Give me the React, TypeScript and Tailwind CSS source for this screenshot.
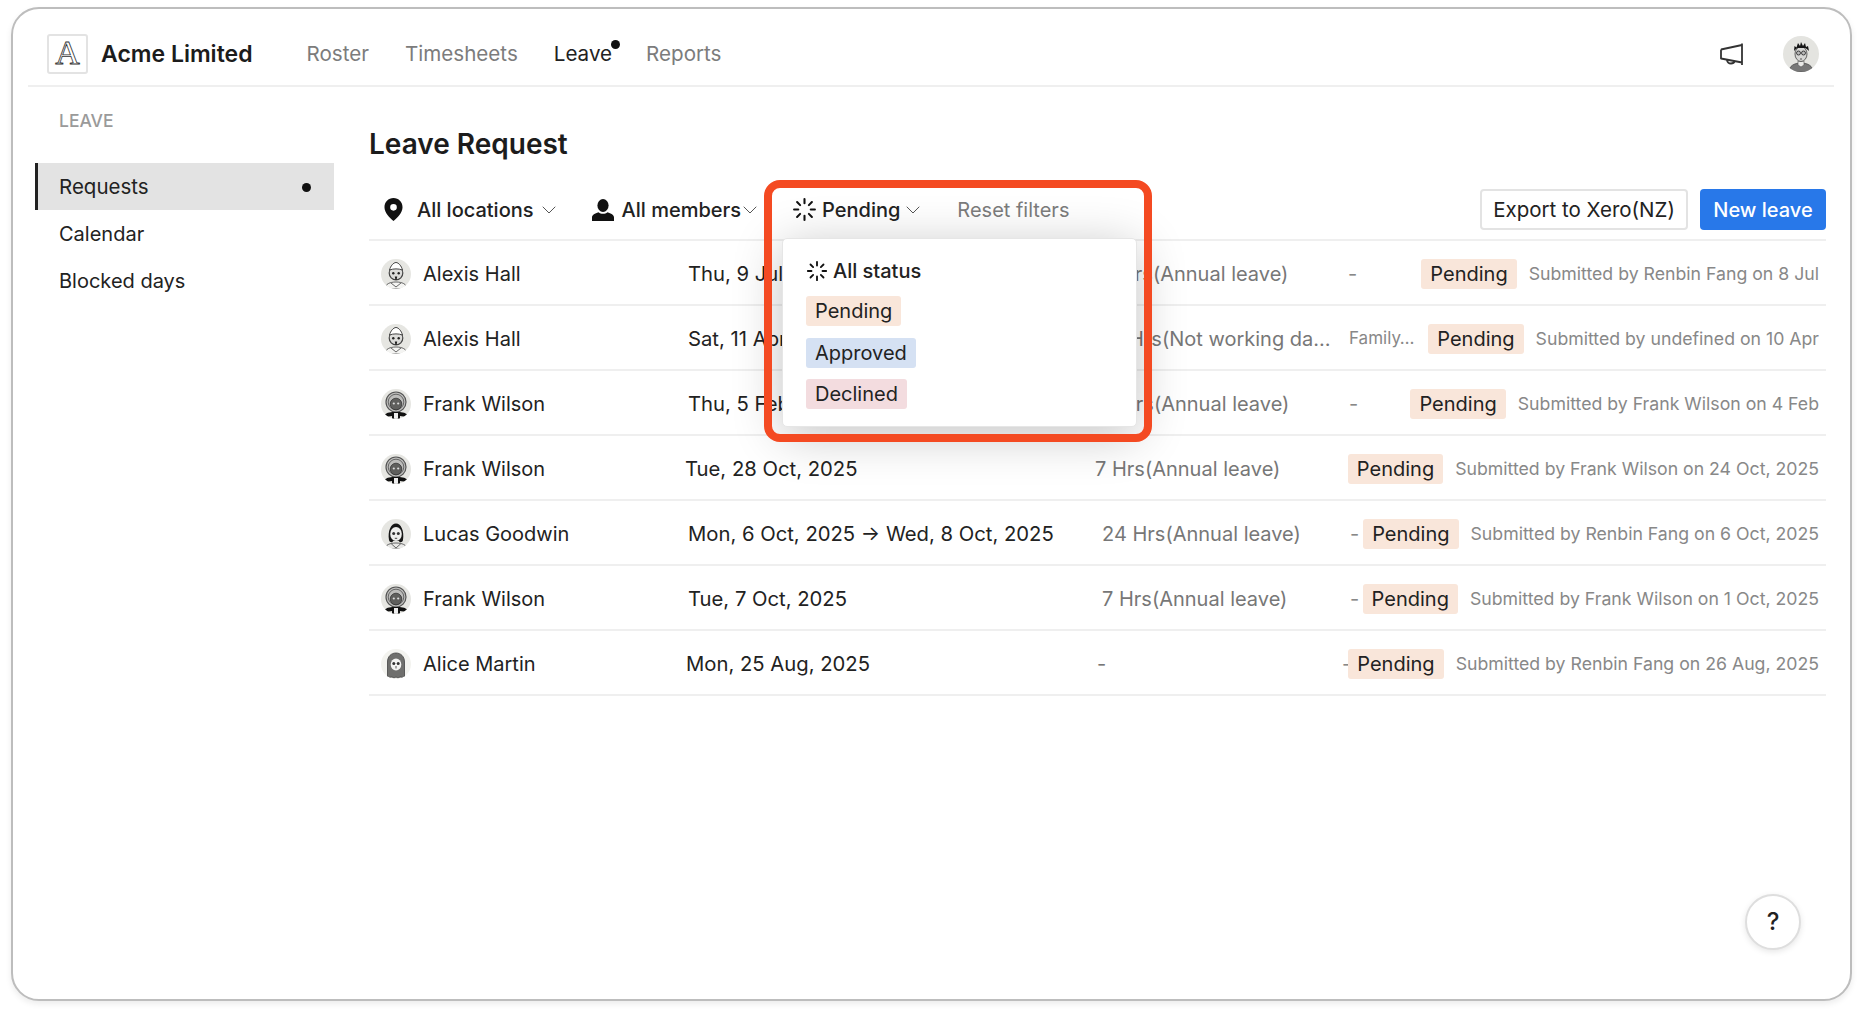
import { ChevronDown, Loader } from 'lucide-react';

type Face = 'alexis' | 'frank' | 'lucas' | 'alice';

type LeaveRow = {
  name: string;
  face: Face;
  date: string;
  dateClass: string;
  hours: string;
  hoursClass: string;
  note: string;
  noteClass: string;
  by: string;
};

const rows: LeaveRow[] = [
  { name: 'Alexis Hall', face: 'alexis', date: 'Thu, 9 Jul, 2026', dateClass: 'ml-[2px] w-[415px]', hours: '7 Hrs(Annual leave)', hoursClass: 'w-[245px]', note: '-', noteClass: 'w-[70px]', by: 'Submitted by Renbin Fang on 8 Jul' },
  { name: 'Alexis Hall', face: 'alexis', date: 'Sat, 11 Apr, 2026', dateClass: 'ml-[2px] w-[424px]', hours: '7 Hrs(Not working da…', hoursClass: 'w-[237px]', note: 'Family…', noteClass: 'w-[77px] text-[17px]', by: 'Submitted by undefined on 10 Apr' },
  { name: 'Frank Wilson', face: 'frank', date: 'Thu, 5 Feb, 2026', dateClass: 'ml-[2px] w-[416px]', hours: '7 Hrs(Annual leave)', hoursClass: 'w-[245px]', note: '-', noteClass: 'w-[60px]', by: 'Submitted by Frank Wilson on 4 Feb' },
  { name: 'Frank Wilson', face: 'frank', date: 'Tue, 28 Oct, 2025', dateClass: '-ml-[1px] w-[410px]', hours: '7 Hrs(Annual leave)', hoursClass: 'w-[250px]', note: '', noteClass: 'w-0', by: 'Submitted by Frank Wilson on 24 Oct, 2025' },
  { name: 'Lucas Goodwin', face: 'lucas', date: 'Mon, 6 Oct, 2025 → Wed, 8 Oct, 2025', dateClass: 'ml-[2px] w-[414px]', hours: '24 Hrs(Annual leave)', hoursClass: 'w-[248px]', note: '-', noteClass: 'w-[13px]', by: 'Submitted by Renbin Fang on 6 Oct, 2025' },
  { name: 'Frank Wilson', face: 'frank', date: 'Tue, 7 Oct, 2025', dateClass: 'ml-[2px] w-[414px]', hours: '7 Hrs(Annual leave)', hoursClass: 'w-[248px]', note: '-', noteClass: 'w-[10px]', by: 'Submitted by Frank Wilson on 1 Oct, 2025' },
  { name: 'Alice Martin', face: 'alice', date: 'Mon, 25 Aug, 2025', dateClass: 'ml-0 w-[411px]', hours: '-', hoursClass: 'w-[245px]', note: '-', noteClass: 'w-[5px]', by: 'Submitted by Renbin Fang on 26 Aug, 2025' },
];

function Avatar({ face }: { face: Face }) {
  return (
    <svg viewBox="0 0 30 30" className="h-[30px] w-[30px] flex-none">
      <defs>
        <clipPath id={`clip-${face}`}>
          <circle cx="15" cy="15" r="15" />
        </clipPath>
      </defs>
      <circle cx="15" cy="15" r="15" fill={face === 'alice' ? '#f3f3ef' : '#e6e6e2'} />
      <g clipPath={`url(#clip-${face})`}>
        {face === 'alexis' && (
          <>
            <path d="M4 30c0-5 5-7 11-7s11 2 11 7z" fill="#f4f4f2" stroke="#666" strokeWidth="1" />
            <circle cx="15" cy="14" r="6.800" fill="#dcdcda" stroke="#444" strokeWidth="1.200" />
            <path d="M8.500 11c1-4 4-7.500 6.500-7.500s5.500 3.500 6.500 7.500c-4-1.500-9-1.500-13 0z" fill="#fff" stroke="#444" strokeWidth="1" />
            <circle cx="12.300" cy="14.200" r="1.200" fill="#222" />
            <circle cx="17.700" cy="14.200" r="1.200" fill="#222" />
            <path d="M13.800 17.500h2.400l-.6 3.500h-1.200z" fill="#222" />
            <path d="M10 24l5 4 5-4" fill="none" stroke="#666" strokeWidth="1" />
          </>
        )}
        {face === 'frank' && (
          <>
            <circle cx="15" cy="13" r="10" fill="#bdbdbb" stroke="#555" strokeWidth="1.200" />
            <circle cx="15" cy="13" r="7.800" fill="none" stroke="#666" strokeWidth="1" />
            <circle cx="15" cy="15" r="5.800" fill="#5f5f5d" stroke="#2c2c2c" strokeWidth="0.700" />
            <circle cx="12.800" cy="14.500" r="1.100" fill="#ddd" />
            <circle cx="17.200" cy="14.500" r="1.100" fill="#ddd" />
            <path d="M3 26.500c3-3.500 7-3.500 12-3.500s9 0 12 3.500c-3 1.500-6 1-8 .5v3h-8v-3c-2 .5-5 1-8-.5z" fill="#111" />
            <rect x="13" y="24" width="4" height="6" fill="#eee" />
          </>
        )}
        {face === 'lucas' && (
          <>
            <path d="M4 30c0-4 5-6 11-6s11 2 11 6z" fill="#e9e9e7" stroke="#666" strokeWidth="1" />
            <path d="M8 21c-1.500-9 2-16.500 7-16.500S23.500 12 22 21c-.5 2.500-3.500 3-4 1h-6c-.5 2-3.500 1.500-4-1z" fill="#161616" />
            <ellipse cx="15" cy="15" rx="5.800" ry="7" fill="#efefed" />
            <circle cx="12.700" cy="14.500" r="1.500" fill="#333" />
            <circle cx="17.300" cy="14.500" r="1.500" fill="#333" />
            <path d="M13.800 19.300h2.400" stroke="#444" strokeWidth="1" />
            <path d="M10 24.500l5 4.500 5-4.500" fill="none" stroke="#666" strokeWidth="1" />
          </>
        )}
        {face === 'alice' && (
          <>
            <path d="M6.500 28V13c0-5.500 3.700-9 8.500-9s8.500 3.500 8.500 9v15c-2 1-3 0-4.500 0-1.500 1-2.500 1-4 0-1.500 1-2.500 1-4 0-1.500 0-2.500 1-4.500 0z" fill="#6f6f6d" stroke="#444" strokeWidth="0.800" />
            <ellipse cx="15" cy="15.500" rx="5.300" ry="6" fill="#f4f4f2" />
            <circle cx="12.800" cy="14.500" r="1.500" fill="#333" />
            <circle cx="17.200" cy="14.500" r="1.500" fill="#333" />
            <path d="M15 17v2.500" stroke="#555" strokeWidth="1" />
          </>
        )}
      </g>
    </svg>
  );
}

function UserAvatar() {
  return (
    <svg viewBox="0 0 36 36" className="h-[36px] w-[36px]">
      <defs>
        <clipPath id="clip-user">
          <circle cx="18" cy="18" r="18" />
        </clipPath>
      </defs>
      <circle cx="18" cy="18" r="18" fill="#e4e4e0" />
      <g clipPath="url(#clip-user)">
        <path d="M6 36c0-6 5-9 12-9s12 3 12 9z" fill="#777" stroke="#444" strokeWidth="0.700" />
        <path d="M15 25h6v4l-3 2-3-2z" fill="#e8e8e6" stroke="#555" strokeWidth="0.600" />
        <ellipse cx="18" cy="18" rx="6" ry="7.500" fill="#d6d6d4" stroke="#444" strokeWidth="0.800" />
        <path d="M11 15l.5-5 2 1.500L15 7l2 3 1-4 2 4 2-3 1 4 2-1 1 5c-1.500-1.500-3-3-4.500-3h-6C13.500 12 12.500 13.500 11 15z" fill="#161616" />
        <circle cx="15.500" cy="17" r="2" fill="#bbb" stroke="#222" strokeWidth="0.800" />
        <circle cx="20.500" cy="17" r="2" fill="#bbb" stroke="#222" strokeWidth="0.800" />
        <path d="M17 23h2" stroke="#333" strokeWidth="0.800" />
      </g>
    </svg>
  );
}

function PinIcon() {
  return (
    <svg viewBox="0 0 20 24" className="h-[23px] w-[19px]">
      <path fillRule="evenodd" d="M10 0C4.500 0 .5 4.200.5 9.500.5 15.500 6 20.500 10 24c4-3.500 9.500-8.500 9.500-14.500C19.500 4.200 15.500 0 10 0zm0 6.200a3.500 3.500 0 1 1 0 7 3.500 3.500 0 0 1 0-7z" fill="#111" />
    </svg>
  );
}

function PersonIcon() {
  return (
    <svg viewBox="0 0 22 22" className="h-[22px] w-[22px]">
      <ellipse cx="11" cy="6.500" rx="5.600" ry="6.500" fill="#111" />
      <path d="M0 22v-3.500c0-2.500 3-4 6.500-5.200 1.300 1 2.800 1.500 4.500 1.500s3.200-.5 4.500-1.500c3.500 1.200 6.500 2.700 6.500 5.200V22z" fill="#111" />
    </svg>
  );
}

function Megaphone() {
  return (
    <svg viewBox="0 0 24 23" className="h-[23px] w-[24px]" fill="none" stroke="#333" strokeWidth="1.800" strokeLinejoin="round">
      <path d="M1 6.500l21-4.500M22 .5v21.500M22 19.500L1 15.500V6.500" />
      <path d="M7 16.800c.3 2.400 2 3.700 4 3.700 2 0 3.300-1 3.800-2.400" />
    </svg>
  );
}

function PendingBadge() {
  return <span className="flex h-[30px] flex-none items-center rounded-[3px] bg-[#f9e6da] px-[9px] text-[20px] text-[#222]">Pending</span>;
}

export default function App() {
  return (
    <div className="h-[1016px] w-[1863px] overflow-hidden bg-white pl-[11px] pt-[7px] font-['Inter','Liberation_Sans',sans-serif]">
      <div className="relative h-[994px] w-[1841px] rounded-[28px] border-2 border-[#bdbdbd] bg-white shadow-[0_3px_6px_rgba(0,0,0,0.08)]">
        <header className="ml-[15px] mr-[16px] flex h-[78px] items-center border-b-2 border-[#efefef] pl-[19px] pr-[15px] pt-[14px]">
          <div className="flex h-[40px] w-[41px] flex-none items-center justify-center rounded-[3px] border-2 border-[#e3e3e3] pb-[2px] font-['Liberation_Serif',serif] text-[34px] leading-none text-white [-webkit-text-stroke:0.8px_#333]">A</div>
          <span className="ml-[13px] text-[23px] font-semibold text-[#1c1c1c]">Acme Limited</span>
          <nav className="ml-[54px] flex items-center gap-[36px] text-[20.6px] text-[#7c7c7c]">
            <span>Roster</span>
            <span>Timesheets</span>
            <span className="relative -mr-[2px] text-[#222]">
              Leave
              <span className="absolute -right-[8px] top-[1px] h-[9px] w-[9px] rounded-full bg-[#111]" />
            </span>
            <span>Reports</span>
          </nav>
          <div className="ml-auto flex items-center gap-[39px]">
            <Megaphone />
            <UserAvatar />
          </div>
        </header>

        <div className="flex">
          <aside className="ml-[22px] w-[299px] flex-none">
            <div className="mt-[23px] h-[22px] text-[17.5px] font-medium leading-[22px] text-[#9a9a9a]">
              <span className="ml-[24px]">LEAVE</span>
            </div>
            <div className="mt-[31px] flex h-[47px] items-center justify-between border-l-[3px] border-[#222] bg-[#e3e3e3] pl-[21px] pr-[23px] pt-[1px] text-[20.5px] text-[#222]">
              <span>Requests</span>
              <span className="h-[9px] w-[9px] rounded-full bg-[#111]" />
            </div>
            <div className="flex h-[47px] items-center pl-[24px] text-[20px] text-[#222]">Calendar</div>
            <div className="flex h-[47px] items-center pl-[24px] text-[20px] text-[#222]">Blocked days</div>
          </aside>

          <main className="ml-[35px] w-[1457px] flex-none">
            <h1 className="mt-[39px] h-[36px] text-[28px] font-semibold leading-[36px] text-[#1c1c1c]">Leave Request</h1>

            <div className="mt-[27px] flex h-[52px] items-start border-b-2 border-[#efefef] pb-[10px] pl-[15px] text-[20px] text-[#222]">
              <div className="flex h-[41px] items-center font-medium">
                <PinIcon />
                <span className="ml-[14px]">All locations</span>
                <ChevronDown className="ml-[3px] h-[24px] w-[24px] text-[#555]" strokeWidth={1} />
                <span className="ml-[31px]"><PersonIcon /></span>
                <span className="ml-[8px]">All members</span>
                <ChevronDown className="-ml-[3px] h-[24px] w-[24px] text-[#555]" strokeWidth={1} />
                <Loader className="ml-[30px] h-[25px] w-[25px] text-[#111]" strokeWidth={2} />
                <span className="ml-[5px]">Pending</span>
                <ChevronDown className="ml-[1px] h-[24px] w-[24px] text-[#555]" strokeWidth={1} />
                <span className="ml-[32px] font-normal text-[#7c7c7c]">Reset filters</span>
              </div>
              <div className="ml-auto flex gap-[12px] text-[20.5px]">
                <button className="h-[41px] w-[208px] rounded-[4px] border-2 border-[#e3e3e3] bg-white pt-[1px] text-[#222]">Export to Xero(NZ)</button>
                <button className="h-[41px] w-[126px] rounded-[4px] bg-[#2878e9] text-[20px] font-medium text-white">New leave</button>
              </div>
            </div>

            {rows.map((row, i) => (
              <div key={i} className="flex h-[65px] items-center border-b-2 border-[#efefef] pl-[12px] pr-[7px] pt-[3px] text-[20px]">
                <div className="flex w-[305px] flex-none items-center gap-[12px] text-[#222]">
                  <Avatar face={row.face} />
                  <span>{row.name}</span>
                </div>
                <span className={`flex-none whitespace-nowrap text-[20.25px] text-[#222] ${row.dateClass}`}>{row.date}</span>
                <span className={`flex-none whitespace-nowrap text-[#777] ${row.hoursClass}`}>{row.hours}</span>
                <span className={`flex-none whitespace-nowrap text-[#888] ${row.noteClass}`}>{row.note}</span>
                <div className="ml-auto flex items-center gap-[12px]">
                  <PendingBadge />
                  <span className="whitespace-nowrap text-[17.7px] text-[#888]">{row.by}</span>
                </div>
              </div>
            ))}
          </main>
        </div>

        <div className="absolute left-[769px] top-[229px] flex h-[189px] w-[355px] flex-col items-start rounded-[5px] border border-[#e6e6e6] bg-white pl-[23px] pt-[19px] text-[20px] text-[#222] shadow-[0_8px_50px_rgba(0,0,0,0.24)]">
          <div className="flex h-[26px] items-center font-medium">
            <Loader className="h-[22px] w-[22px] text-[#111]" strokeWidth={2} />
            <span className="ml-[5px]">All status</span>
          </div>
          <span className="mt-[12px] flex h-[30px] items-center rounded-[3px] bg-[#f9e6da] px-[9px]">Pending</span>
          <span className="mt-[12px] flex h-[30px] items-center rounded-[3px] bg-[#d5e1f3] px-[9px]">Approved</span>
          <span className="mt-[11px] flex h-[30px] items-center rounded-[3px] bg-[#f3dcdf] px-[9px]">Declined</span>
        </div>

        <div className="pointer-events-none absolute left-[751px] top-[171px] h-[262px] w-[388px] rounded-[16px] border-[8px] border-[#f44a22]" />

        <button className="absolute bottom-[49px] right-[49px] flex h-[56px] w-[56px] items-center justify-center rounded-full border-2 border-[#dedede] bg-white text-[24px] font-medium text-[#222] shadow-[0_2px_6px_rgba(0,0,0,0.1)]">?</button>
      </div>
    </div>
  );
}
